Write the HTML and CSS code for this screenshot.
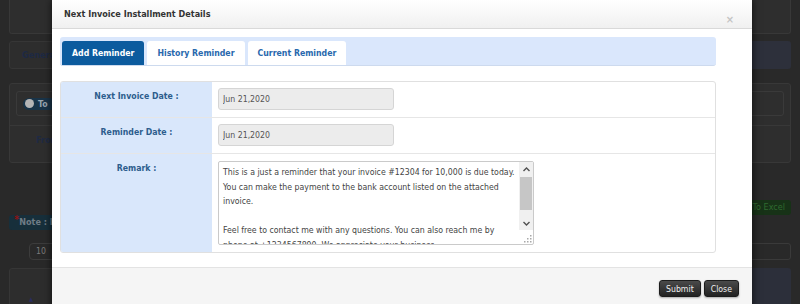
FILE: index.html
```html
<!DOCTYPE html>
<html lang="en">
<head>
    <meta charset="UTF-8">
    <meta name="viewport" content="width=device-width, initial-scale=1.0">
    <title>Installments</title>
    <link rel="stylesheet" href="styles.css">
</head>
<body>

    <!-- Page behind the dialog (dimmed) -->
    <div class="page">
        <div class="panel panel-top"></div>

        <div class="nav-row">
            <div class="nav-tab">General</div>
            <div class="nav-fill"></div>
        </div>

        <div class="panel filter-panel">
            <div class="filter-head">
                <div class="filter-box">
                    <span class="switch"><span class="knob"></span>To</span>
                </div>
            </div>
            <div class="filter-body">From</div>
        </div>

        <div class="tools-row">
            <span class="note"><i>*</i>Note : I</span>
            <span class="excel-btn">Export To Excel</span>
        </div>

        <div class="length-row">
            <span class="select">10</span>
            <span class="search-box"></span>
        </div>

        <div class="grid-head">
            <div class="grid-first"><span class="sort">&#9650;</span></div>
            <div class="grid-rest"></div>
        </div>
    </div>

    <!-- Dialog -->
    <div class="modal">
        <div class="modal-header">
            <h3 class="modal-title">Next Invoice Installment Details</h3>
            <span class="close-x">&times;</span>
        </div>

        <div class="modal-body">
            <div class="tabs">
                <span class="tab active">Add Reminder</span>
                <span class="tab">History Reminder</span>
                <span class="tab">Current Reminder</span>
            </div>

            <div class="form-grid">
                <div class="label-cell">Next Invoice Date :</div>
                <div class="field-cell"><input class="field" type="text" value="Jun 21,2020" readonly></div>

                <div class="label-cell">Reminder Date :</div>
                <div class="field-cell"><input class="field" type="text" value="Jun 21,2020" readonly></div>

                <div class="label-cell last">Remark :</div>
                <div class="field-cell last">
                    <div class="remark-wrap">
                        <textarea class="remark">This is a just a reminder that your invoice #12304 for 10,000 is due today. You can make the payment to the bank account listed on the attached invoice.

Feel free to contact me with any questions. You can also reach me by phone at +1234567890. We appreciate your business.</textarea>
                        <!-- scrollbar drawn over the textarea -->
                        <div class="scrollbar">
                            <span class="sb-btn">
                                <svg width="7" height="5" viewBox="0 0 7 5"><path d="M0.5 4L3.5 1L6.5 4" fill="none" stroke="#505050" stroke-width="1.4"/></svg>
                            </span>
                            <span class="sb-thumb"></span>
                            <span class="sb-btn down">
                                <svg width="7" height="5" viewBox="0 0 7 5"><path d="M0.5 1L3.5 4L6.5 1" fill="none" stroke="#505050" stroke-width="1.4"/></svg>
                            </span>
                        </div>
                        <div class="grip">
                            <svg width="8" height="8" viewBox="0 0 8 8" fill="#a8a8a8">
                                <rect x="6" y="0" width="1.5" height="1.5"/>
                                <rect x="3" y="3" width="1.5" height="1.5"/>
                                <rect x="6" y="3" width="1.5" height="1.5"/>
                                <rect x="0" y="6" width="1.5" height="1.5"/>
                                <rect x="3" y="6" width="1.5" height="1.5"/>
                                <rect x="6" y="6" width="1.5" height="1.5"/>
                            </svg>
                        </div>
                    </div>
                </div>
            </div>
        </div>

        <div class="modal-footer">
            <button class="btn">Submit</button>
            <button class="btn">Close</button>
        </div>
    </div>

</body>
</html>
```

FILE: styles.css
```css
* {
    margin: 0;
    padding: 0;
    box-sizing: border-box;
}

body {
    font-family: "DejaVu Sans Condensed", "DejaVu Sans", sans-serif;
    font-size: 8.7px;
    background-color: #292929;
    color: #333;
    height: 304px;
    overflow: hidden;
}

/* ---------- dimmed page ---------- */

.page {
    padding: 0 9px;
}

.panel {
    background-color: #2e2e2e;
    border: 1px solid #383838;
    border-radius: 3px;
}

.panel-top {
    height: 34px;
    border-top: none;
    border-radius: 0 0 3px 3px;
}

.nav-row {
    display: flex;
    gap: 4px;
    height: 28px;
    margin-top: 7px;
}

.nav-tab {
    width: 110px;
    padding: 0 12px;
    background-color: #2d2d2d;
    border: 1px solid #363636;
    border-radius: 3px;
    color: #1d2944;
    font-weight: bold;
    font-size: 9px;
    line-height: 26px;
    white-space: nowrap;
    overflow: hidden;
}

.nav-fill {
    flex: 1;
    background-color: #2d303b;
    border-radius: 3px;
}

.filter-panel {
    height: 80px;
    margin-top: 14px;
}

.filter-head {
    height: 42px;
    padding: 7px 6px 8px;
    border-bottom: 1px solid #383838;
}

.filter-box {
    height: 25px;
    padding-left: 6px;
    border: 1px solid #3a3a3a;
    border-radius: 3px;
    display: flex;
    align-items: center;
}

.switch {
    display: inline-flex;
    align-items: center;
    gap: 4px;
    height: 12px;
    padding: 0 8px 0 2px;
    background-color: #193449;
    border-radius: 6px;
    color: #9aa6b0;
    font-weight: bold;
}

.knob {
    width: 9px;
    height: 9px;
    border-radius: 50%;
    background-color: #b5b5b5;
}

.filter-body {
    padding: 9px 0 0 26px;
    color: #1e2a44;
    font-weight: bold;
    font-size: 9px;
}

.tools-row {
    display: flex;
    justify-content: space-between;
    height: 30px;
    margin-top: 37px;
}

.note {
    align-self: flex-end;
    width: 60px;
    height: 15px;
    padding: 0 8px 0 5px;
    background-color: #172f3b;
    border-radius: 3px;
    color: #6f7c86;
    font-weight: bold;
    font-size: 9px;
    line-height: 15px;
}

.note i {
    color: #8c1414;
    font-style: normal;
    font-size: 11px;
    vertical-align: top;
    line-height: 9px;
}

.excel-btn {
    align-self: flex-start;
    height: 15px;
    padding: 0 6px;
    background-color: #173217;
    border-radius: 3px;
    color: #2f6a2f;
    font-size: 9px;
    line-height: 15px;
}

.length-row {
    display: flex;
    justify-content: space-between;
    height: 17px;
    margin-top: 13px;
}

.select {
    width: 32px;
    margin-left: 20px;
    padding-left: 6px;
    border: 1px solid #3c3c3c;
    border-radius: 4px;
    color: #7a7a7a;
    line-height: 15px;
}

.search-box {
    width: 190px;
    border: 1px solid #3a3a3a;
    border-radius: 3px;
}

.grid-head {
    display: flex;
    gap: 8px;
    height: 40px;
    margin-top: 8px;
}

.grid-first {
    width: 60px;
    background-color: #2d2d2d;
    border: 1px solid #363636;
    border-radius: 3px;
    padding: 24px 0 0 19px;
}

.sort {
    color: #2a2c5e;
    font-size: 6px;
}

.grid-rest {
    flex: 1;
    background-color: #2c2f3a;
    border-radius: 3px;
}

/* ---------- dialog ---------- */

.modal {
    position: absolute;
    left: 52px;
    top: 0;
    width: 700px;
    height: 330px;
    background-color: #fff;
    box-shadow: 0 0 8px rgba(0, 0, 0, 0.7);
}

.modal-header {
    display: flex;
    justify-content: space-between;
    height: 29px;
    padding: 0 18px 0 12px;
    border-bottom: 1px solid #d9d9d9;
    background: linear-gradient(#fff, #f0f0f0);
}

.modal-title {
    font-size: 9px;
    font-weight: bold;
    color: #333;
    line-height: 28px;
}

.close-x {
    align-self: flex-end;
    padding-bottom: 2px;
    color: #c4c4c4;
    font-size: 11px;
    font-weight: bold;
}

.modal-body {
    padding: 8px 8px 14px;
}

.tabs {
    display: flex;
    gap: 3px;
    width: 656px;
    height: 29px;
    padding: 4px 2px 0;
    background-color: #dae7fc;
    border-bottom: 1px solid #cddaee;
    border-radius: 3px;
}

.tab {
    height: 24px;
    padding: 0 10px;
    background-color: #fff;
    border-radius: 3px 3px 0 0;
    color: #2868ad;
    font-weight: bold;
    line-height: 24px;
}

.tab.active {
    background-color: #0c5b9e;
    color: #fff;
}

.form-grid {
    display: grid;
    grid-template-columns: 151px 1fr;
    width: 656px;
    margin-top: 15px;
    border: 1px solid #e0e0e0;
    border-radius: 3px;
    overflow: hidden;
}

.label-cell {
    padding-top: 7px;
    background-color: #d9e7fb;
    border-bottom: 1px solid #e6e6e6;
    color: #2d5d8d;
    font-weight: bold;
    text-align: center;
    line-height: 14px;
}

.field-cell {
    padding: 6px 6px 7px;
    border-bottom: 1px solid #e6e6e6;
}

.label-cell.last,
.field-cell.last {
    border-bottom: none;
}

.field-cell.last {
    padding-top: 7px;
}

.field {
    display: block;
    width: 176px;
    height: 22px;
    padding: 0 4px;
    background-color: #ececec;
    border: 1px solid #d5d5d5;
    border-radius: 3px;
    font: inherit;
    color: #555;
    outline: none;
}

.remark-wrap {
    position: relative;
    width: 316px;
    height: 84px;
}

.remark {
    display: block;
    width: 100%;
    height: 100%;
    padding: 3px 14px 3px 4px;
    border: 1px solid #cacaca;
    border-radius: 2px;
    font: inherit;
    line-height: 14.5px;
    color: #444;
    overflow: hidden;
    resize: none;
    outline: none;
}

.scrollbar {
    position: absolute;
    top: 1px;
    right: 1px;
    width: 14px;
    height: 68px;
    display: flex;
    flex-direction: column;
    background-color: #f0f0f0;
}

.sb-btn {
    height: 14px;
    display: flex;
    align-items: center;
    justify-content: center;
}

.sb-btn.down {
    margin-top: 6px;
}

.sb-thumb {
    height: 33px;
    margin: 1px 1px 0;
    background-color: #c6c6c6;
}

.grip {
    position: absolute;
    right: 2px;
    bottom: 2px;
    width: 8px;
    height: 8px;
    line-height: 0;
}

.modal-footer {
    display: flex;
    justify-content: flex-end;
    gap: 3px;
    padding: 12px 13px;
    background-color: #f5f5f5;
    border-top: 1px solid #e3e3e3;
}

.btn {
    height: 17px;
    padding: 0 6px;
    background: linear-gradient(#4a4a4a, #222);
    border: 1px solid #1c1c1c;
    border-radius: 3px;
    color: #eee;
    font: inherit;
    box-shadow: 0 1px 2px rgba(0, 0, 0, 0.3);
    cursor: pointer;
}
```
